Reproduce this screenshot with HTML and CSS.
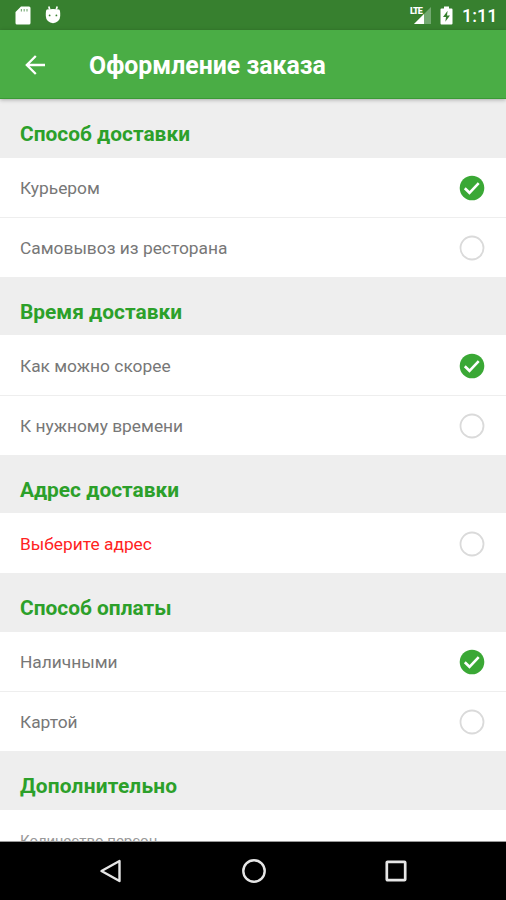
FILE: index.html
```
<!DOCTYPE html>
<html lang="ru">
<head>
<meta charset="utf-8">
<title>Оформление заказа</title>
<link rel="stylesheet" href="styles.css">
</head>
<body>
<svg class="defs" width="0" height="0" aria-hidden="true">
  <symbol id="checked" viewBox="0 0 26 26">
    <circle cx="13" cy="13" r="12.3" fill="#3aa835"/>
    <path d="M5.800 13.200l4.700 4.600 9.200-9.600" fill="none" stroke="#fff" stroke-width="2.600"/>
  </symbol>
  <symbol id="empty" viewBox="0 0 26 26">
    <circle cx="13" cy="13" r="11.500" fill="#fff" stroke="#dadada" stroke-width="1.800"/>
  </symbol>
</svg>
<div class="screen">
  <div class="status">
    <svg class="sd" width="16" height="19" viewBox="0 0 16 19"><path d="M6 0.500h8a1.500 1.500 0 0 1 1.500 1.500v15a1.500 1.500 0 0 1-1.500 1.500H2A1.500 1.500 0 0 1 .5 17V6z" fill="#fff"/><path d="M6.400 3v2.600M9.200 3v2.600M12 3v2.600" stroke="#7fae7d" stroke-width="1.200"/></svg>
    <svg class="bug" width="16" height="18" viewBox="0 0 16 18"><path d="M3.800.6l.9 3M12.200.6l-.9 3" stroke="#fff" stroke-width="1.700"/><path d="M1.800 3.600Q8 2.400 14.200 3.600q1 1 1 3.400v3A7.200 7.200 0 0 1 .8 10V7Q.8 4.600 1.800 3.600z" fill="#fff"/><circle cx="4.600" cy="9.400" r=".9" fill="#37802f"/><circle cx="11.400" cy="9.400" r=".9" fill="#37802f"/></svg>
    <span class="grow"></span>
    <span class="signal">
      <svg width="23" height="19" viewBox="0 0 23 19"><path d="M22 1v17H5z" fill="#73a971"/><path d="M15 8v10H5z" fill="#fff"/></svg>
      <span class="lte">LTE</span>
    </span>
    <svg class="battery" width="13" height="19" viewBox="0 0 13 19"><path d="M4 .5h5v2h2.500a1 1 0 0 1 1 1v14a1 1 0 0 1-1 1h-10a1 1 0 0 1-1-1v-14a1 1 0 0 1 1-1H4z" fill="#fff"/><path d="M7.600 4.800L3 11h3l-.7 4.800L10 9.500H7z" fill="#37802f"/></svg>
    <span class="clock">1:11</span>
  </div>
  <header class="bar">
    <svg width="22" height="22" viewBox="0 0 22 22"><path d="M20 11H2.500M10.800 2L1.800 11l9 9" fill="none" stroke="#fff" stroke-width="2.300"/></svg>
    <h1>Оформление заказа</h1>
  </header>
  <main class="list">
    <h2 class="first">Способ доставки</h2>
    <div class="row"><span>Курьером</span><svg><use href="#checked"/></svg></div>
    <div class="row"><span>Самовывоз из ресторана</span><svg><use href="#empty"/></svg></div>
    <h2>Время доставки</h2>
    <div class="row"><span>Как можно скорее</span><svg><use href="#checked"/></svg></div>
    <div class="row"><span>К нужному времени</span><svg><use href="#empty"/></svg></div>
    <h2>Адрес доставки</h2>
    <div class="row"><span class="error">Выберите адрес</span><svg><use href="#empty"/></svg></div>
    <h2>Способ оплаты</h2>
    <div class="row"><span>Наличными</span><svg><use href="#checked"/></svg></div>
    <div class="row"><span>Картой</span><svg><use href="#empty"/></svg></div>
    <h2 class="extra">Дополнительно</h2>
    <div class="field">Количество персон</div>
  </main>
  <nav class="nav">
    <svg width="24" height="24" viewBox="0 0 24 24"><path d="M20.500 2v20L2.500 12z" fill="none" stroke="#e6e6e6" stroke-width="2.400" stroke-linejoin="round"/></svg>
    <svg width="24" height="24" viewBox="0 0 24 24"><circle cx="12" cy="12" r="10.700" fill="none" stroke="#e6e6e6" stroke-width="2.400"/></svg>
    <svg width="24" height="24" viewBox="0 0 24 24"><rect x="2.800" y="2.800" width="18.400" height="18.400" rx=".8" fill="none" stroke="#e6e6e6" stroke-width="2.700"/></svg>
  </nav>
</div>
</body>
</html>
```
FILE: styles.css
```
* { box-sizing: border-box; }
body { margin: 0; font-family: Roboto, "Noto Sans", sans-serif; }
.defs { display: block; }
.screen { display: flex; flex-direction: column; width: 506px; height: 900px; overflow: hidden; background: #fff; }
.status { flex: none; display: flex; align-items: center; height: 30px; padding: 0 10px 0 15px; background: #37802f; color: #fff; }
.bug { margin-left: 14px; margin-bottom: 1px; }
.grow { flex: 1; }
.signal { position: relative; display: flex; width: 23px; }
.lte { position: absolute; left: 1px; top: 0; font-size: 9px; line-height: 10px; font-weight: 900; letter-spacing: -1px; }
.battery { margin-left: 8px; }
.clock { margin-left: 9px; width: 34px; font-size: 18px; font-weight: 500; line-height: 30px; padding-top: 2px; white-space: nowrap; }
.bar { flex: none; display: flex; align-items: center; height: 69px; padding-left: 25px; background: #4aad45; border-bottom: 1px solid #3a9a35; box-shadow: 0 1px 4px rgba(0, 0, 0, .28); z-index: 1; }
.bar svg { margin-top: 1px; }
.bar h1 { margin: 0 0 0 42px; padding-top: 4px; color: #fff; font-size: 24.850px; font-weight: 700; line-height: 32px; white-space: nowrap; }
.list { flex: 1; min-height: 0; overflow: hidden; border-bottom: 1px solid #999; }
h2 { margin: 0; height: 58.800px; padding: 11px 20px 0; background: #eee; color: #2ca02a; font-size: 20.900px; font-weight: 700; line-height: 48px; white-space: nowrap; }
h2.first { height: 58.500px; }
h2.extra { letter-spacing: .2px; }
.row { display: flex; align-items: center; justify-content: space-between; height: 59.600px; padding: 1px 21px 0 20px; color: #777; font-size: 17.350px; }
.row + .row { border-top: 1px solid #eee; }
.row svg { width: 26px; height: 26px; }
.row .error { color: #f22; }
.field { padding: 20px 20px 0; color: #999; font-size: 15px; line-height: 22px; }
.nav { flex: none; display: flex; align-items: center; justify-content: center; gap: 118.500px; height: 58px; padding-left: 1px; background: #000; }
```
